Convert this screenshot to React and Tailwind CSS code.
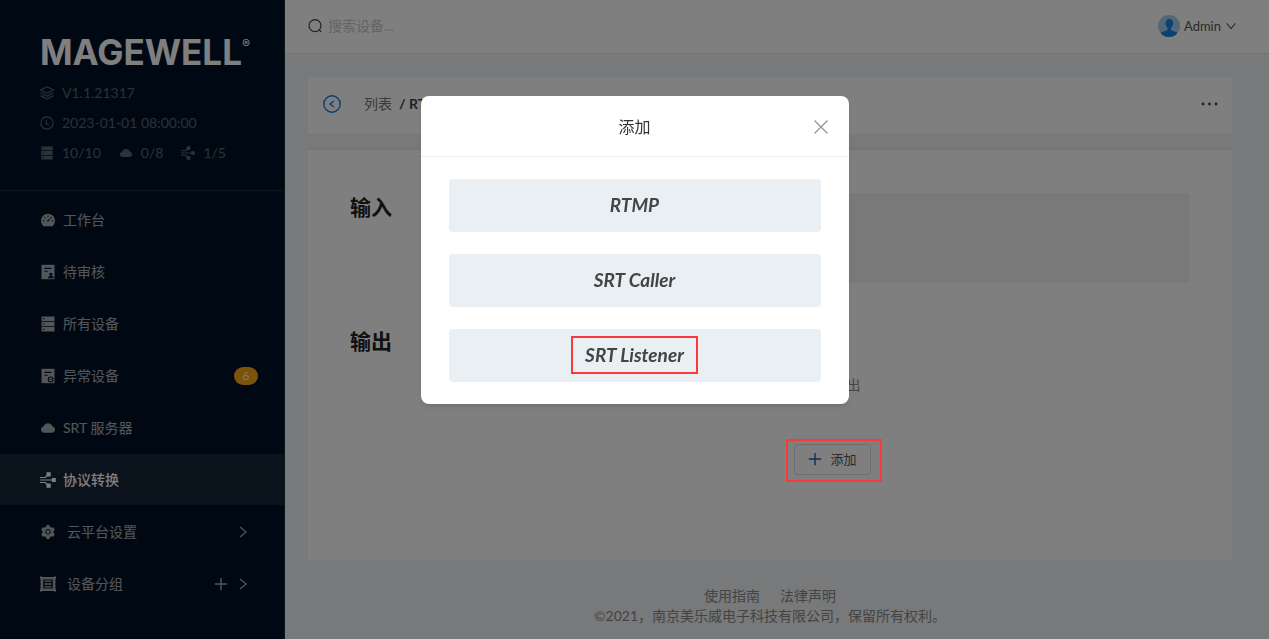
// App.jsx

import { useState } from 'react'
import {
  AiFillCloud,
  AiFillDashboard,
  AiFillSetting,
} from 'react-icons/ai'

function ServerIcon({ className }) {
  return (
    <svg viewBox="0 0 16 16" className={className} fill="currentColor" aria-hidden="true">
      <path fillRule="evenodd" d="M1.5.5h13v4.4h-13zM3.2 2v1.2h1.2V2z" />
      <path fillRule="evenodd" d="M1.5 5.8h13v4.4h-13zM3.2 7.4v1.2h1.2V7.4z" />
      <path fillRule="evenodd" d="M1.5 11.1h13v4.4h-13zM3.2 12.7v1.2h1.2v-1.2z" />
    </svg>
  )
}

function ConvertIcon({ className }) {
  return (
    <svg viewBox="0 0 16 16" className={className} fill="currentColor" aria-hidden="true">
      <path d="M6.5.2h4.2v4.2H6.5zM11.8 6h4v4h-4zM6.5 11.6h4.2v4.2H6.5z" />
      <path
        d="M0 5.5h5.2L7.6 3.2M0 8h12M0 10.5h5.2l2.4 2.3"
        fill="none"
        stroke="currentColor"
        strokeWidth="1.2"
      />
    </svg>
  )
}

function ReviewIcon({ className }) {
  return (
    <svg viewBox="0 0 16 16" className={className} aria-hidden="true">
      <path d="M1.5.8h13v14.4h-13z" fill="currentColor" />
      <path d="M4.4 4.4h7M4.4 7.2h3.2" stroke="#001529" strokeWidth="1.1" />
      <circle cx="10.9" cy="10.2" r="1.5" fill="#001529" />
      <path d="M8.2 14.2v-1.5l1.9-1h1.6l1.9 1v1.5z" fill="#001529" />
    </svg>
  )
}

function AbnormalIcon({ className }) {
  return (
    <svg viewBox="0 0 16 16" className={className} aria-hidden="true">
      <path d="M1.5.8h13v14.4h-13z" fill="currentColor" />
      <path d="M4.4 4.4h7M4.4 7.2h3.2" stroke="#001529" strokeWidth="1.1" />
      <circle cx="10.7" cy="11.4" r="2.4" fill="none" stroke="#001529" strokeWidth="1.1" />
      <path d="M9.7 11.4h2" stroke="#001529" strokeWidth="0.8" />
    </svg>
  )
}

function GroupIcon({ className }) {
  return (
    <svg viewBox="0 0 16 16" className={className} fill="currentColor" aria-hidden="true">
      <path
        fillRule="evenodd"
        d="M0 .5h2.4v.6h11.2V.5H16v2.4h-.6v10.2h.6v2.4h-2.4v-.6H2.4v.6H0v-2.4h.6V2.9H0zM3.2 3.4v9.2h9.6V3.4z"
      />
      <path d="M4.6 4.4h6.8v1.4H4.6zM4.6 7.3h6.8v1.4H4.6zM4.6 10.2h6.8v1.4H4.6z" />
    </svg>
  )
}

function LayersIcon({ className }) {
  return (
    <svg viewBox="0 0 16 16" className={className} fill="none" stroke="currentColor" strokeWidth="1.3" strokeLinejoin="round" aria-hidden="true">
      <path d="M8 .8 15.3 4.6 8 8.4.7 4.6zM.7 7.8 8 11.6l7.3-3.8M.7 11 8 14.8l7.3-3.8" />
    </svg>
  )
}

function ClockIcon({ className }) {
  return (
    <svg viewBox="0 0 16 16" className={className} fill="none" stroke="currentColor" strokeWidth="1.3" aria-hidden="true">
      <circle cx="8" cy="8" r="7" />
      <path d="M7.2 4.4v4.4l3 1.6" />
    </svg>
  )
}

function SearchIcon({ className }) {
  return (
    <svg viewBox="0 0 16 16" className={className} fill="none" stroke="currentColor" strokeWidth="1.2" aria-hidden="true">
      <circle cx="8" cy="7.6" r="6" />
      <path d="m12.2 11.8 2 2.2" />
    </svg>
  )
}

function ChevronIcon({ className }) {
  return (
    <svg viewBox="0 0 16 16" className={className} fill="none" stroke="currentColor" strokeWidth="1.4" aria-hidden="true">
      <path d="m4.5 2.2 7 5.8-7 5.8" />
    </svg>
  )
}

function PlusIcon({ className }) {
  return (
    <svg viewBox="0 0 16 16" className={className} fill="none" stroke="currentColor" strokeWidth="1.6" aria-hidden="true">
      <path d="M8 1v14M1 8h14" />
    </svg>
  )
}

const menu = [
  { label: '工作台', icon: AiFillDashboard },
  { label: '待审核', icon: ReviewIcon },
  { label: '所有设备', icon: ServerIcon },
  { label: '异常设备', icon: AbnormalIcon, badge: 6 },
  { label: 'SRT 服务器', icon: AiFillCloud },
  { label: '协议转换', icon: ConvertIcon, active: true },
  { label: '云平台设置', icon: AiFillSetting, group: true },
  { label: '设备分组', icon: GroupIcon, group: true, canAdd: true },
]

const protocols = [
  { name: 'RTMP' },
  { name: 'SRT Caller' },
  { name: 'SRT Listener', marked: true },
]

function Sidebar() {
  return (
    <aside className="w-[285px] shrink-0 border-r border-white/10 bg-[#001226]">
      <div className="border-b border-white/10 pt-8 pb-6 pl-10 text-sm text-white/35">
        <div className="flex h-10 items-center text-white">
          <span className="font-['Inter',sans-serif] text-[35px] leading-10 font-bold">MAGEWELL</span>
          <span className="self-start pt-1 font-['Inter',sans-serif] text-xs leading-4">®</span>
        </div>
        <div className="mt-2 flex h-[26px] items-center gap-2">
          <LayersIcon className="size-[14px]" />
          V1.1.21317
        </div>
        <div className="mt-1 flex h-[26px] items-center gap-2">
          <ClockIcon className="size-[14px]" />
          2023-01-01 08:00:00
        </div>
        <div className="mt-1 flex h-[26px] items-center gap-[18px]">
          <span className="flex items-center gap-2">
            <ServerIcon className="size-[14px]" />
            10/10
          </span>
          <span className="flex items-center gap-2">
            <AiFillCloud className="size-[14px]" />
            0/8
          </span>
          <span className="flex items-center gap-2">
            <ConvertIcon className="size-[14px]" />
            1/5
          </span>
        </div>
      </div>
      <nav className="mt-[3px] flex flex-col gap-px text-sm">
        {menu.map(({ label, icon: Icon, active, badge, group, canAdd }) => (
          <div
            key={label}
            className={`flex h-[51px] items-center pr-[26px] pl-10 ${
              active ? 'bg-white/8 font-medium text-white' : 'text-white/65'
            }`}
          >
            <a href="#" className={`flex flex-1 items-center ${group ? 'gap-[11px]' : 'gap-[7px]'}`}>
              <Icon className="size-4" />
              {label}
            </a>
            {badge && (
              <span className="flex h-[18px] w-6 items-center justify-center rounded-full bg-[#faa414] text-xs text-white/80">
                {badge}
              </span>
            )}
            {canAdd && (
              <button type="button" aria-label="添加分组" className="mr-2">
                <PlusIcon className="size-[14px]" />
              </button>
            )}
            {group && (
              <button type="button" aria-label="展开" className="mr-2">
                <ChevronIcon className="size-[14px]" />
              </button>
            )}
          </div>
        ))}
      </nav>
    </aside>
  )
}

function Header() {
  return (
    <header className="flex h-[54px] items-center justify-between border-b border-[#e4e6ea] bg-white pr-8 pb-px pl-[22px]">
      <label className="flex items-center gap-[5px]">
        <SearchIcon className="size-4 text-[#444]" />
        <input
          type="search"
          aria-label="搜索设备"
          placeholder="搜索设备..."
          className="w-48 text-sm outline-none placeholder:text-[#c8c8ce]"
        />
      </label>
      <button type="button" className="flex items-center gap-1 text-[13px] text-[#555]">
        <svg viewBox="0 0 22 22" className="size-[22px]" aria-hidden="true">
          <defs>
            <clipPath id="avatar">
              <circle cx="11" cy="11" r="11" />
            </clipPath>
          </defs>
          <g clipPath="url(#avatar)">
            <path d="M0 0h22v22H0z" fill="#a5d0f2" />
            <ellipse cx="11.3" cy="8.6" rx="3.8" ry="4.6" fill="#1683dc" />
            <path d="M9.6 12h3.4v3l6 2.4V22H3v-4.6L9.6 15z" fill="#1683dc" />
          </g>
        </svg>
        Admin
        <ChevronIcon className="size-3 rotate-90" />
      </button>
    </header>
  )
}

function Modal({ onClose }) {
  return (
    <div className="fixed inset-0 z-10 flex items-start justify-center bg-black/50 pt-24">
      <div
        role="dialog"
        aria-modal="true"
        aria-labelledby="dialog-title"
        className="w-[428px] rounded-lg bg-white shadow-md"
      >
        <div className="flex h-[61px] items-center border-b border-[#e9edf2] px-5 pt-0.5">
          <h2 id="dialog-title" className="flex-1 pl-4 text-center text-base text-[#333]">
            添加
          </h2>
          <button type="button" aria-label="关闭" onClick={onClose} className="text-[#999]">
            <svg viewBox="0 0 16 16" className="size-4" fill="none" stroke="currentColor" strokeWidth="1.4" aria-hidden="true">
              <path d="m1.5 1.5 13 13M14.5 1.5l-13 13" />
            </svg>
          </button>
        </div>
        <div className="flex flex-col gap-[22px] px-7 py-[22px]">
          {protocols.map(({ name, marked }) => (
            <button
              key={name}
              type="button"
              className="flex h-[53px] items-center justify-center rounded-sm bg-[#e9eff3] pb-0.5 text-[19px] leading-[26px] font-bold text-[#444] italic"
            >
              <span className={marked ? 'border-2 border-[#f93a3a] px-3 py-1' : ''}>{name}</span>
            </button>
          ))}
        </div>
      </div>
    </div>
  )
}

export default function App() {
  const [open, setOpen] = useState(true)

  return (
    <div className="flex min-h-screen bg-[#f0f2f5] font-['Lato','Noto_Sans_CJK_SC',sans-serif] leading-5">
      <Sidebar />
      <div className="flex min-w-0 flex-1 flex-col">
        <Header />
        <main className="pt-[23px] pr-[37px] pl-[23px]">
          <div className="flex h-[57px] items-center justify-between bg-white px-[14px] pb-[3px]">
            <div className="flex items-center text-sm">
              <button type="button" aria-label="返回" className="mr-[22px] text-[#1678dc]">
                <svg viewBox="0 0 20 20" className="size-5" fill="none" stroke="currentColor" strokeWidth="1.4" aria-hidden="true">
                  <circle cx="10" cy="10" r="8.2" />
                  <path d="m12 7-4 3 4 3" />
                </svg>
              </button>
              <a href="#" className="text-[#777]">列表</a>
              <span className="ml-[7px] font-bold text-[#444]">/ RTMP</span>
            </div>
            <button type="button" aria-label="更多" className="text-[#444]">
              <svg viewBox="0 0 18 18" className="size-[18px]" fill="currentColor" aria-hidden="true">
                <circle cx="3" cy="9" r="1.4" />
                <circle cx="9.5" cy="9" r="1.4" />
                <circle cx="16" cy="9" r="1.4" />
              </svg>
            </button>
          </div>

          <div className="mt-[13px] border-t-3 border-[#e8eaed] bg-white px-[42px] pt-[43px] pb-[85px]">
            <section className="flex">
              <h2 className="w-[125px] text-[21px] leading-7 font-bold text-[#222]">输入</h2>
              <div className="h-[90px] flex-1 rounded-sm bg-[#f2f2f2]" />
            </section>
            <section className="mt-11 flex">
              <h2 className="w-[125px] text-[21px] leading-7 font-bold text-[#222]">输出</h2>
              <div className="flex flex-1 flex-col items-center pt-12">
                <p className="text-sm text-[#888]">暂无输出</p>
                <div className="relative mt-[49px]">
                  <button
                    type="button"
                    onClick={() => setOpen(true)}
                    className="flex h-[31px] items-center gap-2 rounded-sm border border-[#dcdcdc] px-[13px] pb-0.5 text-[13px] text-[#555]"
                  >
                    <PlusIcon className="size-[14px] text-[#1f5fae]" />
                    添加
                  </button>
                  <span className="pointer-events-none absolute -top-[5px] -right-[11px] -bottom-[7px] -left-2 z-20 border-2 border-[#f93a3a]" />
                </div>
              </div>
            </section>
          </div>
        </main>
        <footer className="pt-[26px] pr-[14px] text-center text-sm text-[#888]">
          <div className="flex justify-center gap-5">
            <a href="#">使用指南</a>
            <a href="#">法律声明</a>
          </div>
          <p>©2021，南京美乐威电子科技有限公司，保留所有权利。</p>
        </footer>
      </div>
      {open && <Modal onClose={() => setOpen(false)} />}
    </div>
  )
}
